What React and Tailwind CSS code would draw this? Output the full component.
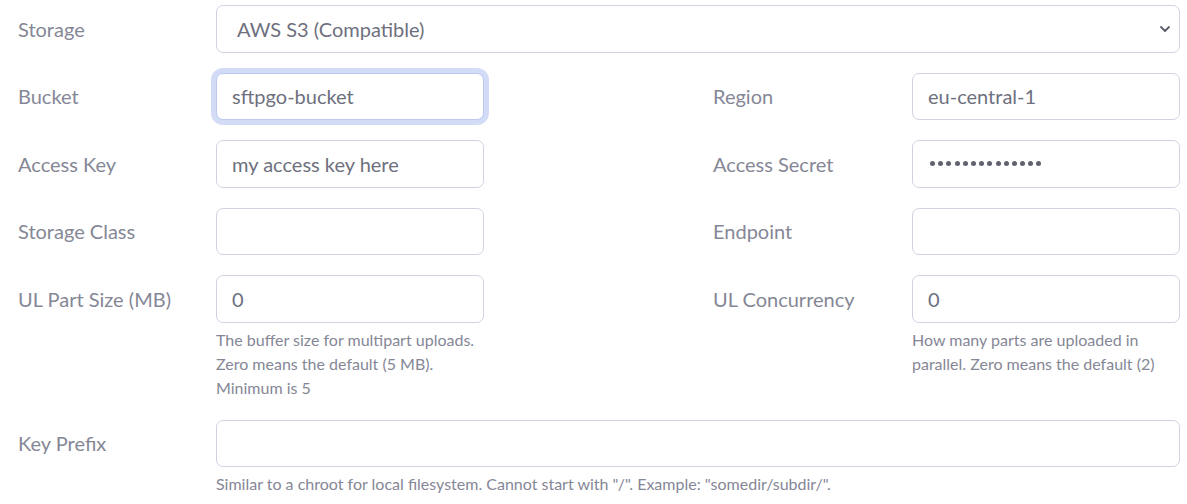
import React from 'react';

const font = { fontFamily: 'Lato, "Open Sans", sans-serif' };

const Label = ({ children }) => (
  <div className="h-[47.5px] flex items-center text-[20px] text-[#858796]">{children}</div>
);

const Field = ({ value, focused = false }) => (
  <input
    type="text"
    readOnly
    value={value}
    className={
      'w-full h-[47.5px] px-[15px] rounded-[7px] border bg-white text-[20px] text-[#6e707e] outline-none ' +
      (focused
        ? 'border-[#bac8f3] shadow-[0_0_0_5px_rgba(78,115,223,0.25)]'
        : 'border-[#d1d3e2]')
    }
  />
);

const SecretField = ({ length }) => (
  <div className="w-full h-[47.5px] px-[17px] rounded-[7px] border border-[#d1d3e2] bg-white flex items-center gap-[3.2px]">
    {Array.from({ length }).map((_, i) => (
      <span key={i} className="w-[5px] h-[5px] rounded-full bg-[#60626f]" />
    ))}
  </div>
);

const Help = ({ children }) => (
  <p className="mt-[5px] text-[16px] leading-[24px] text-[#858796]">{children}</p>
);

const App = () => {
  return (
    <div className="min-h-screen bg-white pt-[5px] pl-[18px]" style={font}>
      {/* Storage */}
      <div className="grid grid-cols-[198px_964px] mb-[20px]">
        <Label>Storage</Label>
        <div className="relative h-[47.5px] rounded-[7px] border border-[#d1d3e2] flex items-center px-[20px] text-[20px] text-[#6e707e]">
          AWS S3 (Compatible)
          <svg className="absolute right-[8px] top-[18px]" width="12" height="10" viewBox="0 0 12 10">
            <path d="M2 3 L6 7 L10 3" fill="none" stroke="#5a5c69" strokeWidth="1.8" strokeLinecap="round" strokeLinejoin="round" />
          </svg>
        </div>
      </div>

      {/* Bucket / Region */}
      <div className="grid grid-cols-[198px_268px_229px_199px_268px] mb-[20px]">
        <Label>Bucket</Label>
        <Field value="sftpgo-bucket" focused />
        <div />
        <Label>Region</Label>
        <Field value="eu-central-1" />
      </div>

      {/* Access Key / Secret */}
      <div className="grid grid-cols-[198px_268px_229px_199px_268px] mb-[20px]">
        <Label>Access Key</Label>
        <Field value="my access key here" />
        <div />
        <Label>Access Secret</Label>
        <SecretField length={14} />
      </div>

      {/* Storage Class / Endpoint */}
      <div className="grid grid-cols-[198px_268px_229px_199px_268px] mb-[20px]">
        <Label>Storage Class</Label>
        <Field value="" />
        <div />
        <Label>Endpoint</Label>
        <Field value="" />
      </div>

      {/* Part size / Concurrency */}
      <div className="grid grid-cols-[198px_268px_229px_199px_268px] mb-[20px] items-start">
        <Label>UL Part Size (MB)</Label>
        <div>
          <Field value="0" />
          <Help>
            The buffer size for multipart uploads.
            <br />
            Zero means the default (5 MB).
            <br />
            Minimum is 5
          </Help>
        </div>
        <div />
        <Label>UL Concurrency</Label>
        <div>
          <Field value="0" />
          <Help>
            How many parts are uploaded in
            <br />
            parallel. Zero means the default (2)
          </Help>
        </div>
      </div>

      {/* Key Prefix */}
      <div className="grid grid-cols-[198px_964px] items-start">
        <Label>Key Prefix</Label>
        <div>
          <Field value="" />
          <Help>Similar to a chroot for local filesystem. Cannot start with "/". Example: "somedir/subdir/".</Help>
        </div>
      </div>
    </div>
  );
};

export default App;
